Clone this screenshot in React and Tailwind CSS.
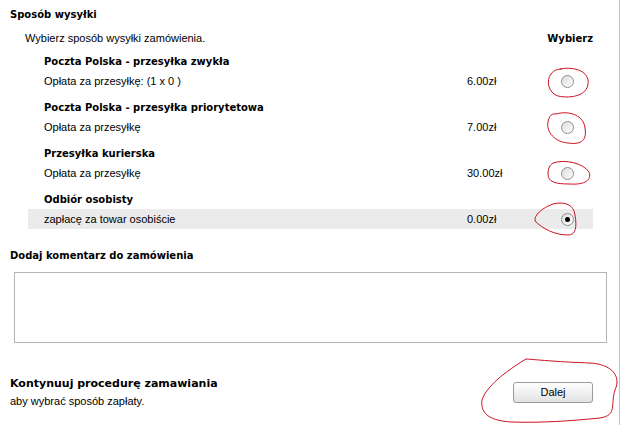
import React from 'react';

const font = "font-['Liberation_Sans',Arial,sans-serif]";
const bold = "font-['DejaVu_Sans',Verdana,sans-serif] font-bold text-[10px]";

const options = [
  { title: 'Poczta Polska - przesyłka zwykła', label: 'Opłata za przesyłkę: (1 x 0 )', price: '6.00zł' },
  { title: 'Poczta Polska - przesyłka priorytetowa', label: 'Opłata za przesyłkę', price: '7.00zł' },
  { title: 'Przesyłka kurierska', label: 'Opłata za przesyłkę', price: '30.00zł' },
  { title: 'Odbiór osobisty', label: 'zapłacę za towar osobiście', price: '0.00zł', checked: true },
];

const Radio = ({ checked }) => (
  <div className="w-[13px] h-[13px] rounded-full border border-[#8f8f8f] bg-gradient-to-br from-[#dcdcdc] to-white flex items-center justify-center">
    {checked && <div className="w-[5px] h-[5px] rounded-full bg-black" />}
  </div>
);

const Marks = () => (
  <svg className="absolute inset-0 pointer-events-none" width="620" height="425" fill="none" stroke="#cc1122" strokeWidth="1">
    <path d="M560 69 C575 66 590 72 588 84 C587 95 572 99 558 96 C548 93 546 80 551 74 C554 70 558 69 562 69" />
    <path d="M556 114 C570 110 584 116 585 128 C587 140 582 145 568 143 C555 142 546 132 548 122 C549 116 552 113 556 114" />
    <path d="M553 163 C565 159 583 163 589 172 C592 180 585 185 570 184 C555 184 548 182 548 174 C548 168 550 165 553 163" />
    <path d="M553 204 C565 201 574 205 575 215 C577 227 576 235 568 235 C555 235 543 229 535 221 C534 215 542 208 553 204" />
    <path d="M526 359 C540 360 560 362 590 363 C610 364 622 375 615 390 C610 405 618 415 600 418 C570 421 540 423 512 422 C492 421 480 415 482 400 C485 390 498 376 526 359" />
  </svg>
);

export default function App() {
  return (
    <div className={`relative w-[620px] h-[425px] bg-white text-black text-[11px] border-r border-[#c4c4c4] overflow-hidden ${font}`}>
      <div className={`h-[28px] pl-[10px] flex items-center ${bold}`}>Sposób wysyłki</div>
      <div className="ml-[25px] w-[568px] h-[20px] flex items-center justify-between">
        <span>Wybierz sposób wysyłki zamówienia.</span>
        <span className={bold}>Wybierz</span>
      </div>
      <div className="mt-[3px] flex flex-col gap-[6px]">
        {options.map((o) => (
          <div key={o.title}>
            <div className={`h-[20px] pl-[44px] flex items-center ${bold}`}>{o.title}</div>
            <div className={`ml-[28px] w-[565px] h-[20px] flex items-center ${o.checked ? 'bg-[#ebebeb]' : ''}`}>
              <span className="w-[439px] pl-[16px]">{o.label}</span>
              <span className="w-[94px]">{o.price}</span>
              <Radio checked={o.checked} />
            </div>
          </div>
        ))}
      </div>
      <div className={`mt-[16px] h-[20px] pl-[10px] flex items-center ${bold}`}>Dodaj komentarz do zamówienia</div>
      <div className="mt-[7px] ml-[14px] w-[593px] h-[71px] border border-[#b4b4b4] bg-white" />
      <div className="mt-[33px] flex justify-between">
        <div className="pl-[10px]">
          <div className={`h-[17px] flex items-center ${bold} text-[11px]`}>Kontynuuj procedurę zamawiania</div>
          <div className="h-[17px] flex items-center">aby wybrać sposób zapłaty.</div>
        </div>
        <button className="mt-[6px] mr-[26px] w-[80px] h-[21px] rounded-[3px] border border-[#9a9a9a] bg-gradient-to-b from-white to-[#e2e2e2] text-[11px]">
          Dalej
        </button>
      </div>
      <Marks />
    </div>
  );
}
